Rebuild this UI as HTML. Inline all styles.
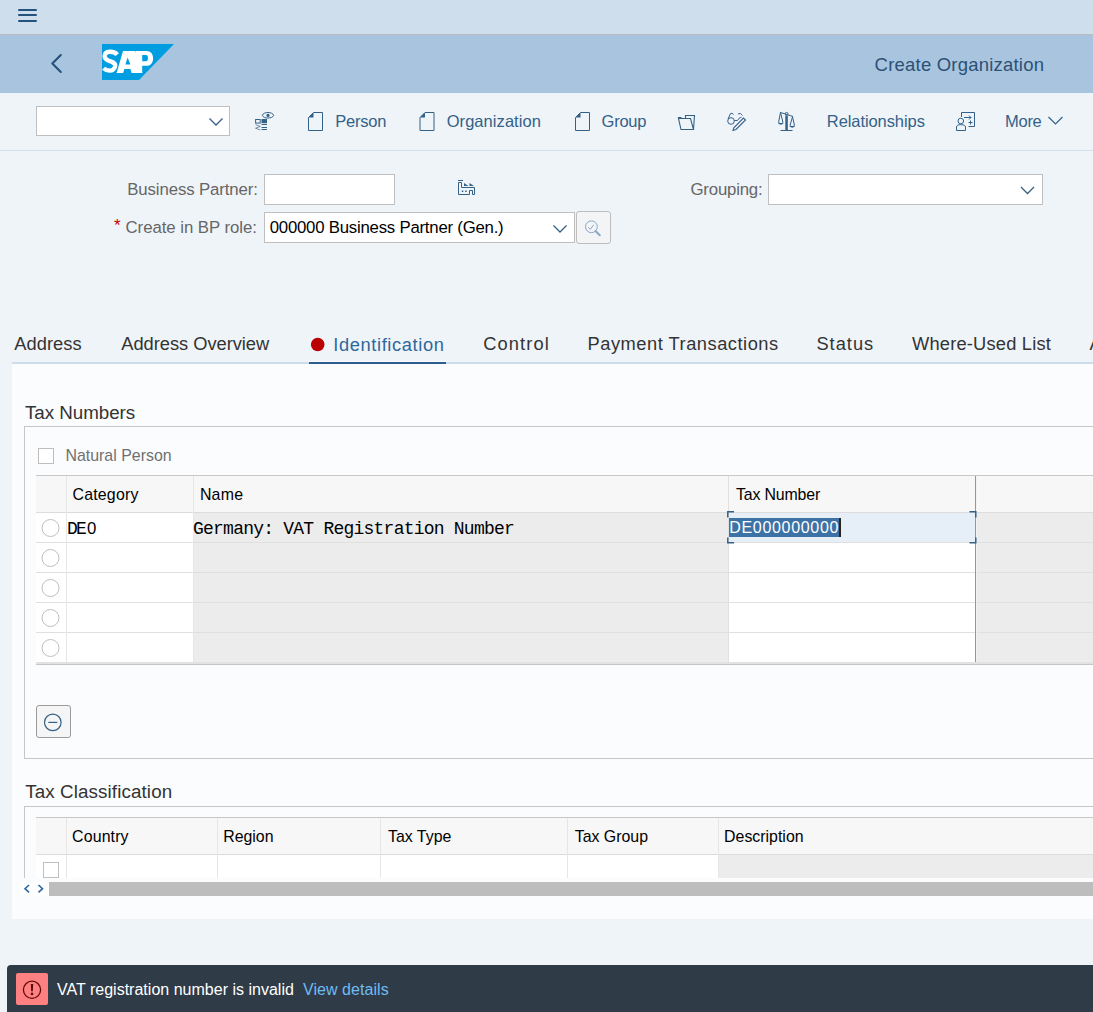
<!DOCTYPE html>
<html><head><meta charset="utf-8">
<style>
*{box-sizing:border-box;margin:0;padding:0}
html,body{width:1093px;height:1012px;overflow:hidden}
body{position:relative;background:#eff4f9;font-family:"Liberation Sans",sans-serif;color:#333}
.a{position:absolute}
.t{position:absolute;white-space:nowrap;line-height:1}
svg{position:absolute;left:0;top:0;overflow:visible}
</style></head><body>
<!-- shell bar -->
<div class="a" style="left:0;top:0;width:1093px;height:34px;background:#cedeed"></div>
<div class="a" style="left:0;top:34px;width:1093px;height:1px;background:#bbbbbb"></div>
<div class="a" style="left:0;top:35px;width:1093px;height:58px;background:#a8c4de"></div>
<div class="a" style="left:0;top:150px;width:1093px;height:1px;background:#d3e0ec"></div>

<!-- toolbar dropdown -->
<div class="a" style="left:36px;top:106px;width:194px;height:30px;background:#fff;border:1px solid #bfbfbf"></div>
<!-- form inputs -->
<div class="a" style="left:264px;top:174px;width:131px;height:31px;background:#fff;border:1px solid #bfbfbf"></div>
<div class="a" style="left:264px;top:212px;width:311px;height:31px;background:#fff;border:1px solid #bfbfbf"></div>
<div class="a" style="left:576px;top:211px;width:35px;height:33px;background:#f3f4f6;border:1px solid #bdbdbd;border-radius:3px"></div>
<div class="a" style="left:768px;top:174px;width:275px;height:31px;background:#fff;border:1px solid #bfbfbf"></div>

<!-- content panel -->
<div class="a" style="left:12px;top:364px;width:1081px;height:555px;background:#fbfcfe"></div>
<div class="a" style="left:12px;top:362px;width:1081px;height:2px;background:#cddcea"></div>
<div class="a" style="left:308px;top:361px;width:139px;height:1px;background:#fbfcfe"></div><div class="a" style="left:309px;top:362px;width:137px;height:2px;background:#2b5e8e"></div>

<!-- group box 1 -->
<div class="a" style="left:24px;top:426px;width:1080px;height:333px;border:1px solid #c6c6c6"></div>
<div class="a" style="left:38px;top:448px;width:16px;height:16px;background:#fff;border:1px solid #bfbfbf"></div>

<!-- table 1 -->
<div class="a" style="left:36px;top:475px;width:1057px;height:1px;background:#c8c8c8"></div>
<div class="a" style="left:36px;top:476px;width:1057px;height:36px;background:#f7f7f7"></div>
<div class="a" style="left:36px;top:512px;width:1057px;height:1px;background:#dcdcdc"></div>
<div class="a" style="left:36px;top:513px;width:157px;height:149px;background:#fff"></div>
<div class="a" style="left:193px;top:513px;width:535px;height:149px;background:#ececec"></div>
<div class="a" style="left:728px;top:513px;width:247px;height:149px;background:#fff"></div>
<div class="a" style="left:975px;top:513px;width:118px;height:149px;background:#ececec"></div>
<!-- row lines -->
<div class="a" style="left:36px;top:542px;width:1057px;height:1px;background:#e0e0e0"></div>
<div class="a" style="left:36px;top:572px;width:1057px;height:1px;background:#e0e0e0"></div>
<div class="a" style="left:36px;top:602px;width:1057px;height:1px;background:#e0e0e0"></div>
<div class="a" style="left:36px;top:632px;width:1057px;height:1px;background:#e0e0e0"></div>
<div class="a" style="left:36px;top:662px;width:1057px;height:2px;background:#e2e2e2"></div><div class="a" style="left:36px;top:664px;width:1057px;height:1px;background:#c6c6c6"></div>
<!-- col lines -->
<div class="a" style="left:66px;top:476px;width:1px;height:186px;background:#e6e6e6"></div>
<div class="a" style="left:193px;top:476px;width:1px;height:186px;background:#e6e6e6"></div>
<div class="a" style="left:728px;top:476px;width:1px;height:186px;background:#e0e0e0"></div>
<div class="a" style="left:975px;top:476px;width:1px;height:186px;background:#969696"></div><div class="a" style="left:976px;top:476px;width:1px;height:186px;background:#f2f2f2"></div>
<!-- focused cell -->
<div class="a" style="left:729px;top:513px;width:246px;height:29px;background:#e6eef7"></div>
<div class="a" style="left:729px;top:518px;width:110px;height:19px;background:#3d72a6"></div>
<div class="a" style="left:839px;top:518px;width:2px;height:19px;background:#2a2320"></div>
<svg width="1093" height="1012">
 <g fill="none" stroke="#346187" stroke-width="1.5">
  <path d="M734,511.8 H727.8 V517.5"/><path d="M734,542.8 H727.8 V537.5"/>
  <path d="M969.5,511.8 H975.8 V517.5"/><path d="M969.5,542.8 H975.8 V537.5"/>
 </g>
 <g fill="#fff" stroke="#bfbfbf" stroke-width="1">
  <circle cx="50.5" cy="528" r="8.5"/><circle cx="50.5" cy="558" r="8.5"/><circle cx="50.5" cy="588" r="8.5"/><circle cx="50.5" cy="618" r="8.5"/><circle cx="50.5" cy="648" r="8.5"/>
 </g>
</svg>

<!-- minus button -->
<div class="a" style="left:36px;top:705px;width:35px;height:33px;background:#f5f5f5;border:1px solid #9a9a9a;border-radius:3px"></div>
<svg width="1093" height="1012"><g fill="none" stroke="#346187" stroke-width="1.2"><circle cx="52.8" cy="722.4" r="8.3"/><path d="M48.3,722.4 H57.3"/></g></svg>

<!-- group box 2 + table 2 -->
<div class="a" style="left:24px;top:806px;width:1080px;height:72px;border:1px solid #c6c6c6;border-bottom:none"></div>
<div class="a" style="left:36px;top:817px;width:1057px;height:1px;background:#c8c8c8"></div>
<div class="a" style="left:36px;top:818px;width:1057px;height:36px;background:#f7f7f7"></div>
<div class="a" style="left:36px;top:854px;width:1057px;height:1px;background:#dcdcdc"></div>
<div class="a" style="left:36px;top:855px;width:682px;height:23px;background:#fff"></div>
<div class="a" style="left:718px;top:855px;width:375px;height:23px;background:#ececec"></div>
<div class="a" style="left:66px;top:818px;width:1px;height:60px;background:#e6e6e6"></div>
<div class="a" style="left:217px;top:818px;width:1px;height:60px;background:#e6e6e6"></div>
<div class="a" style="left:380px;top:818px;width:1px;height:60px;background:#e6e6e6"></div>
<div class="a" style="left:567px;top:818px;width:1px;height:60px;background:#e6e6e6"></div>
<div class="a" style="left:718px;top:818px;width:1px;height:60px;background:#e6e6e6"></div>
<div class="a" style="left:43px;top:862px;width:16px;height:16px;background:#fff;border:1px solid #bfbfbf"></div>
<!-- scroller -->
<div class="a" style="left:20px;top:882px;width:1073px;height:14px;background:#fff"></div>
<div class="a" style="left:49px;top:882px;width:1044px;height:14px;background:#bdbdbd"></div>
<svg width="1093" height="1012"><g fill="none" stroke="#2f67a0" stroke-width="1.6"><path d="M29,885 L25,888.7 L29,892.4"/><path d="M38.5,885 L42.5,888.7 L38.5,892.4"/></g></svg>

<!-- message bar -->
<div class="a" style="left:7px;top:965px;width:1100px;height:60px;background:#2f3b47;border-radius:4px"></div>
<div class="a" style="left:16px;top:973px;width:32px;height:32px;background:#ff8080;border-radius:2px"></div>
<svg width="1093" height="1012"><g fill="none" stroke="#5c0a0a" stroke-width="1.3"><circle cx="32" cy="989.8" r="8.6"/></g><path d="M30.8,984 h2.4 l-0.4,7.2 h-1.6z M32,992.6 a1.3,1.3 0 1 0 0.01,0z" fill="#5c0a0a"/></svg>

<!-- shell icons -->
<svg width="1093" height="1012">
 <g stroke="#24527d" stroke-width="2" stroke-linecap="round"><path d="M19,10 H36 M19,15 H36 M19,21 H36"/></g>
 <path d="M60.8,55 L52.3,63.5 L60.8,72" fill="none" stroke="#24527d" stroke-width="2.1" stroke-linecap="round" stroke-linejoin="round"/>
 <polygon points="102,44 174,44 139,80 102,80" fill="#009ee0"/>
</svg>
<svg width="1093" height="1012">
 <path d="M117.2,54.6 C115,51.8 111.5,51.6 109.6,51.7 C106.2,51.9 104.6,53.6 104.6,56.2 C104.6,59.6 108.2,60.6 111.2,61.6 C114,62.5 115.2,63.5 115.2,65.6 C115.2,68.6 112.5,70.6 109.5,70.6 C107.2,70.6 105.2,69.8 103.6,68.2" fill="none" stroke="#fff" stroke-width="4.4"/>
 <path fill="#fff" fill-rule="evenodd" d="M116.6,73 L123,51 H135.4 L142.3,73 H131.6 L130.4,69 H124.3 L123.2,73 Z M127.6,57.6 L125.4,64.4 H130.4 Z"/>
 <path fill="#fff" fill-rule="evenodd" d="M135.8,51 H146.6 C150.6,51 153.1,54 153.1,58.4 C153.1,62.9 150.4,65.8 146.2,65.8 H142.2 V73 H135.8 Z M142.2,55 V61.2 H146 C147.4,61.2 148,60 148,58.1 C148,56.2 147.4,55 146,55 Z"/>
</svg>

<!-- toolbar icons -->
<svg width="1093" height="1012">
 <g fill="none" stroke="#346187" stroke-width="1">
  <!-- dropdown chevrons -->
  <path d="M209.5,118.5 L216,125 L222.5,118.5" stroke-width="1.3"/>
  <path d="M553.5,225.5 L560,232 L566.5,225.5" stroke-width="1.3"/>
  <path d="M1021,187 L1027.5,193.5 L1034,187" stroke-width="1.3"/>
  <path d="M1048.5,117 L1055.5,124 L1062.5,117" stroke-width="1.2"/>
  <!-- doc icons -->
  <path d="M313.5,112.5 H322.5 V130.5 H308.5 V117.5 Z"/>
  <path d="M425,112.5 H434 V130.5 H420 V117.5 Z"/>
  <path d="M580.5,112.5 H589.5 V130.5 H575.5 V117.5 Z"/>
  <!-- folder -->
  <path d="M678.5,118.5 H690.5 L693.5,129.5 H681 Z M685.5,118 V115.5 H694.5 L693.5,129.5 M678.5,118.5 V117.5 H681.5" stroke-width="1.1"/>
  <!-- glasses -->
  <circle cx="731" cy="121" r="3.3"/>
  <path d="M728,119 L730.5,113.5 Q732,112.5 733.5,114.5 M734.3,120.5 H737.5 Q739,117.5 741.5,117.2 M738,114 Q740.5,112 742.5,115.5"/>
  <path d="M733,130.5 L734,127.5 L743.5,118 L745.5,120 L736,129.5 Z" stroke-width="1.1"/>
  <!-- scale -->
  <path d="M780.5,130.5 H792.5 M780,112.3 L793,116.5 M780.5,112.5 L778.5,122.5 M780.5,112.5 L783,122.5 M792.5,116.8 L790,125.5 M792.5,116.8 L794.5,125.5"/>
  <path d="M778.5,122.8 Q780.8,125 783,122.8 M790,125.8 Q792.3,128 794.5,125.8" stroke-width="1.5"/>
  <circle cx="786.6" cy="113.8" r="1.4"/>
  <!-- person board -->
  <path d="M961.5,117 V112.5 H974.5 V126.5 H968.5"/>
  <circle cx="960.8" cy="121" r="2.8"/>
  <path d="M956.5,130.5 V127 Q956.5,124.7 960.8,124.7 Q965.5,124.7 965.5,127 V130.5 Z"/>
  <path d="M964,117.5 H971 M969,115.5 L971,117.5 L969,119.5 M970.5,120.5 V124.5 M968.5,122.5 H972.5"/>
  <!-- factory -->
  <path d="M458,180.5 H463"/>
  <path d="M458.5,182.5 H461.5 V187.5 H474.5 V194.5 H472.5 V190.5 H469.5 V194.5 H458.5 Z"/>
 </g>
 <g fill="#346187">
  <path d="M308.5,117.5 L313.5,112.5 V117.5 Z"/>
  <path d="M420,117.5 L425,112.5 V117.5 Z"/>
  <path d="M575.5,117.5 L580.5,112.5 V117.5 Z"/>
  <rect x="785.3" y="115.5" width="2.5" height="15"/>
  <path d="M464,183 L468.5,186 H464 Z M469.5,183 L474,186 H469.5 Z"/>
  <rect x="461.8" y="190.5" width="1.5" height="1.5"/><rect x="465.2" y="190.5" width="1.5" height="1.5"/>
  <!-- eye list icon -->
  <rect x="261.5" y="119" width="5.5" height="4.2"/>
  <rect x="261.5" y="124" width="5.5" height="1"/><rect x="261.5" y="127" width="5.5" height="1"/><rect x="261.5" y="129" width="5.5" height="1"/>
  
  <circle cx="268" cy="115.4" r="1.6"/>
 </g>
 <g fill="none" stroke="#346187" stroke-width="1">
  <rect x="255.6" y="119.5" width="4.6" height="3.6"/>
  <path d="M262.3,115.3 C263.5,111.6 272.5,111.6 273.7,115.3 C272.5,119 263.5,119 262.3,115.3 Z"/>
  <path d="M255.5,124.6 L260.3,126.4 L255.5,128.2 L260.3,130" stroke-width="0.8" opacity="0.85"/>
 </g>
 <!-- search icon -->
 <g fill="none" stroke="#89a7c7" stroke-width="1">
  <circle cx="591.4" cy="226.8" r="5.9"/>
  <path d="M588.3,227.3 L590.3,229.3 L593.7,224.8"/>
 </g>
 <path d="M595.5,231 L599.8,235.3" stroke="#89a7c7" stroke-width="2" stroke-linecap="round"/>
 <!-- red tab dot -->
 <circle cx="317.7" cy="344.5" r="6.8" fill="#bb0000"/>
 <!-- required star -->
</svg>
<div class="t" style="left:114px;top:217px;font-size:17px;color:#cc0000">*</div>

<div class="t" style="left:874.6px;top:55.6px;font-size:18.5px;color:#2c5175;letter-spacing:0.21px;">Create Organization</div>
<div class="t" style="left:335.2px;top:113.0px;font-size:16.5px;color:#346187;letter-spacing:-0.22px;">Person</div>
<div class="t" style="left:446.7px;top:113.0px;font-size:16.5px;color:#346187;letter-spacing:0.06px;">Organization</div>
<div class="t" style="left:601.6px;top:113.0px;font-size:16.5px;color:#346187;letter-spacing:-0.25px;">Group</div>
<div class="t" style="left:826.8px;top:112.8px;font-size:16.5px;color:#346187;letter-spacing:-0.08px;">Relationships</div>
<div class="t" style="left:1005.0px;top:112.8px;font-size:16.5px;color:#346187;letter-spacing:-0.27px;">More</div>
<div class="t" style="left:127.3px;top:182.2px;font-size:16.8px;color:#666666;letter-spacing:-0.12px;">Business Partner:</div>
<div class="t" style="left:125.5px;top:219.7px;font-size:16.8px;color:#666666;letter-spacing:-0.04px;">Create in BP role:</div>
<div class="t" style="left:690.5px;top:182.2px;font-size:16.8px;color:#666666;letter-spacing:-0.19px;">Grouping:</div>
<div class="t" style="left:269.7px;top:219.6px;font-size:16.8px;color:#000000;letter-spacing:-0.23px;">000000 Business Partner (Gen.)</div>
<div class="t" style="left:14.3px;top:334.8px;font-size:18.3px;color:#333333;letter-spacing:0.03px;">Address</div>
<div class="t" style="left:121.3px;top:334.8px;font-size:18.3px;color:#333333;letter-spacing:-0.03px;">Address Overview</div>
<div class="t" style="left:333.3px;top:335.5px;font-size:18.3px;color:#30679d;letter-spacing:0.61px;">Identification</div>
<div class="t" style="left:483.2px;top:334.8px;font-size:18.3px;color:#333333;letter-spacing:1.13px;">Control</div>
<div class="t" style="left:587.6px;top:334.8px;font-size:18.3px;color:#333333;letter-spacing:0.51px;">Payment Transactions</div>
<div class="t" style="left:816.4px;top:334.8px;font-size:18.3px;color:#333333;letter-spacing:1.0px;">Status</div>
<div class="t" style="left:912.0px;top:334.8px;font-size:18.3px;color:#333333;letter-spacing:0.19px;">Where-Used List</div>
<div class="t" style="left:1089.5px;top:334.8px;font-size:18.3px;color:#333333;">A</div>
<div class="t" style="left:25.0px;top:404.2px;font-size:18.8px;color:#333333;letter-spacing:-0.05px;">Tax Numbers</div>
<div class="t" style="left:25.2px;top:783.4px;font-size:18.8px;color:#333333;letter-spacing:0.11px;">Tax Classification</div>
<div class="t" style="left:65.4px;top:447.9px;font-size:15.9px;color:#707070;letter-spacing:0.02px;">Natural Person</div>
<div class="t" style="left:72.5px;top:486.8px;font-size:15.9px;color:#000000;letter-spacing:0.2px;">Category</div>
<div class="t" style="left:199.9px;top:486.8px;font-size:15.9px;color:#000000;letter-spacing:0.23px;">Name</div>
<div class="t" style="left:735.9px;top:486.8px;font-size:15.9px;color:#000000;letter-spacing:-0.14px;">Tax Number</div>
<div class="t" style="left:72.1px;top:828.5px;font-size:15.9px;color:#000000;letter-spacing:0.13px;">Country</div>
<div class="t" style="left:223.2px;top:828.5px;font-size:15.9px;color:#000000;">Region</div>
<div class="t" style="left:388.0px;top:828.5px;font-size:15.9px;color:#000000;">Tax Type</div>
<div class="t" style="left:574.7px;top:828.5px;font-size:15.9px;color:#000000;">Tax Group</div>
<div class="t" style="left:724.1px;top:828.5px;font-size:15.9px;color:#000000;">Description</div>
<div class="t" style="left:66.9px;top:519.9px;font-size:18px;color:#000000;letter-spacing:-1.7px;font-family:'Liberation Mono',monospace;">DE</div>
<div class="t" style="left:87.0px;top:520.9px;font-size:16.8px;color:#000000;">0</div>
<div class="t" style="left:193.0px;top:519.7px;font-size:18px;color:#000000;letter-spacing:-0.77px;font-family:'Liberation Mono',monospace;">Germany: VAT Registration Number</div>
<div class="t" style="left:729.2px;top:520.3px;font-size:16px;color:#ffffff;letter-spacing:0.69px;">DE000000000</div>
<div class="t" style="left:57.0px;top:982.0px;font-size:16px;color:#ffffff;letter-spacing:0.01px;">VAT registration number is invalid</div>
<div class="t" style="left:303.0px;top:982.0px;font-size:16px;color:#70bbf5;letter-spacing:0.05px;">View details</div>

</body></html>
